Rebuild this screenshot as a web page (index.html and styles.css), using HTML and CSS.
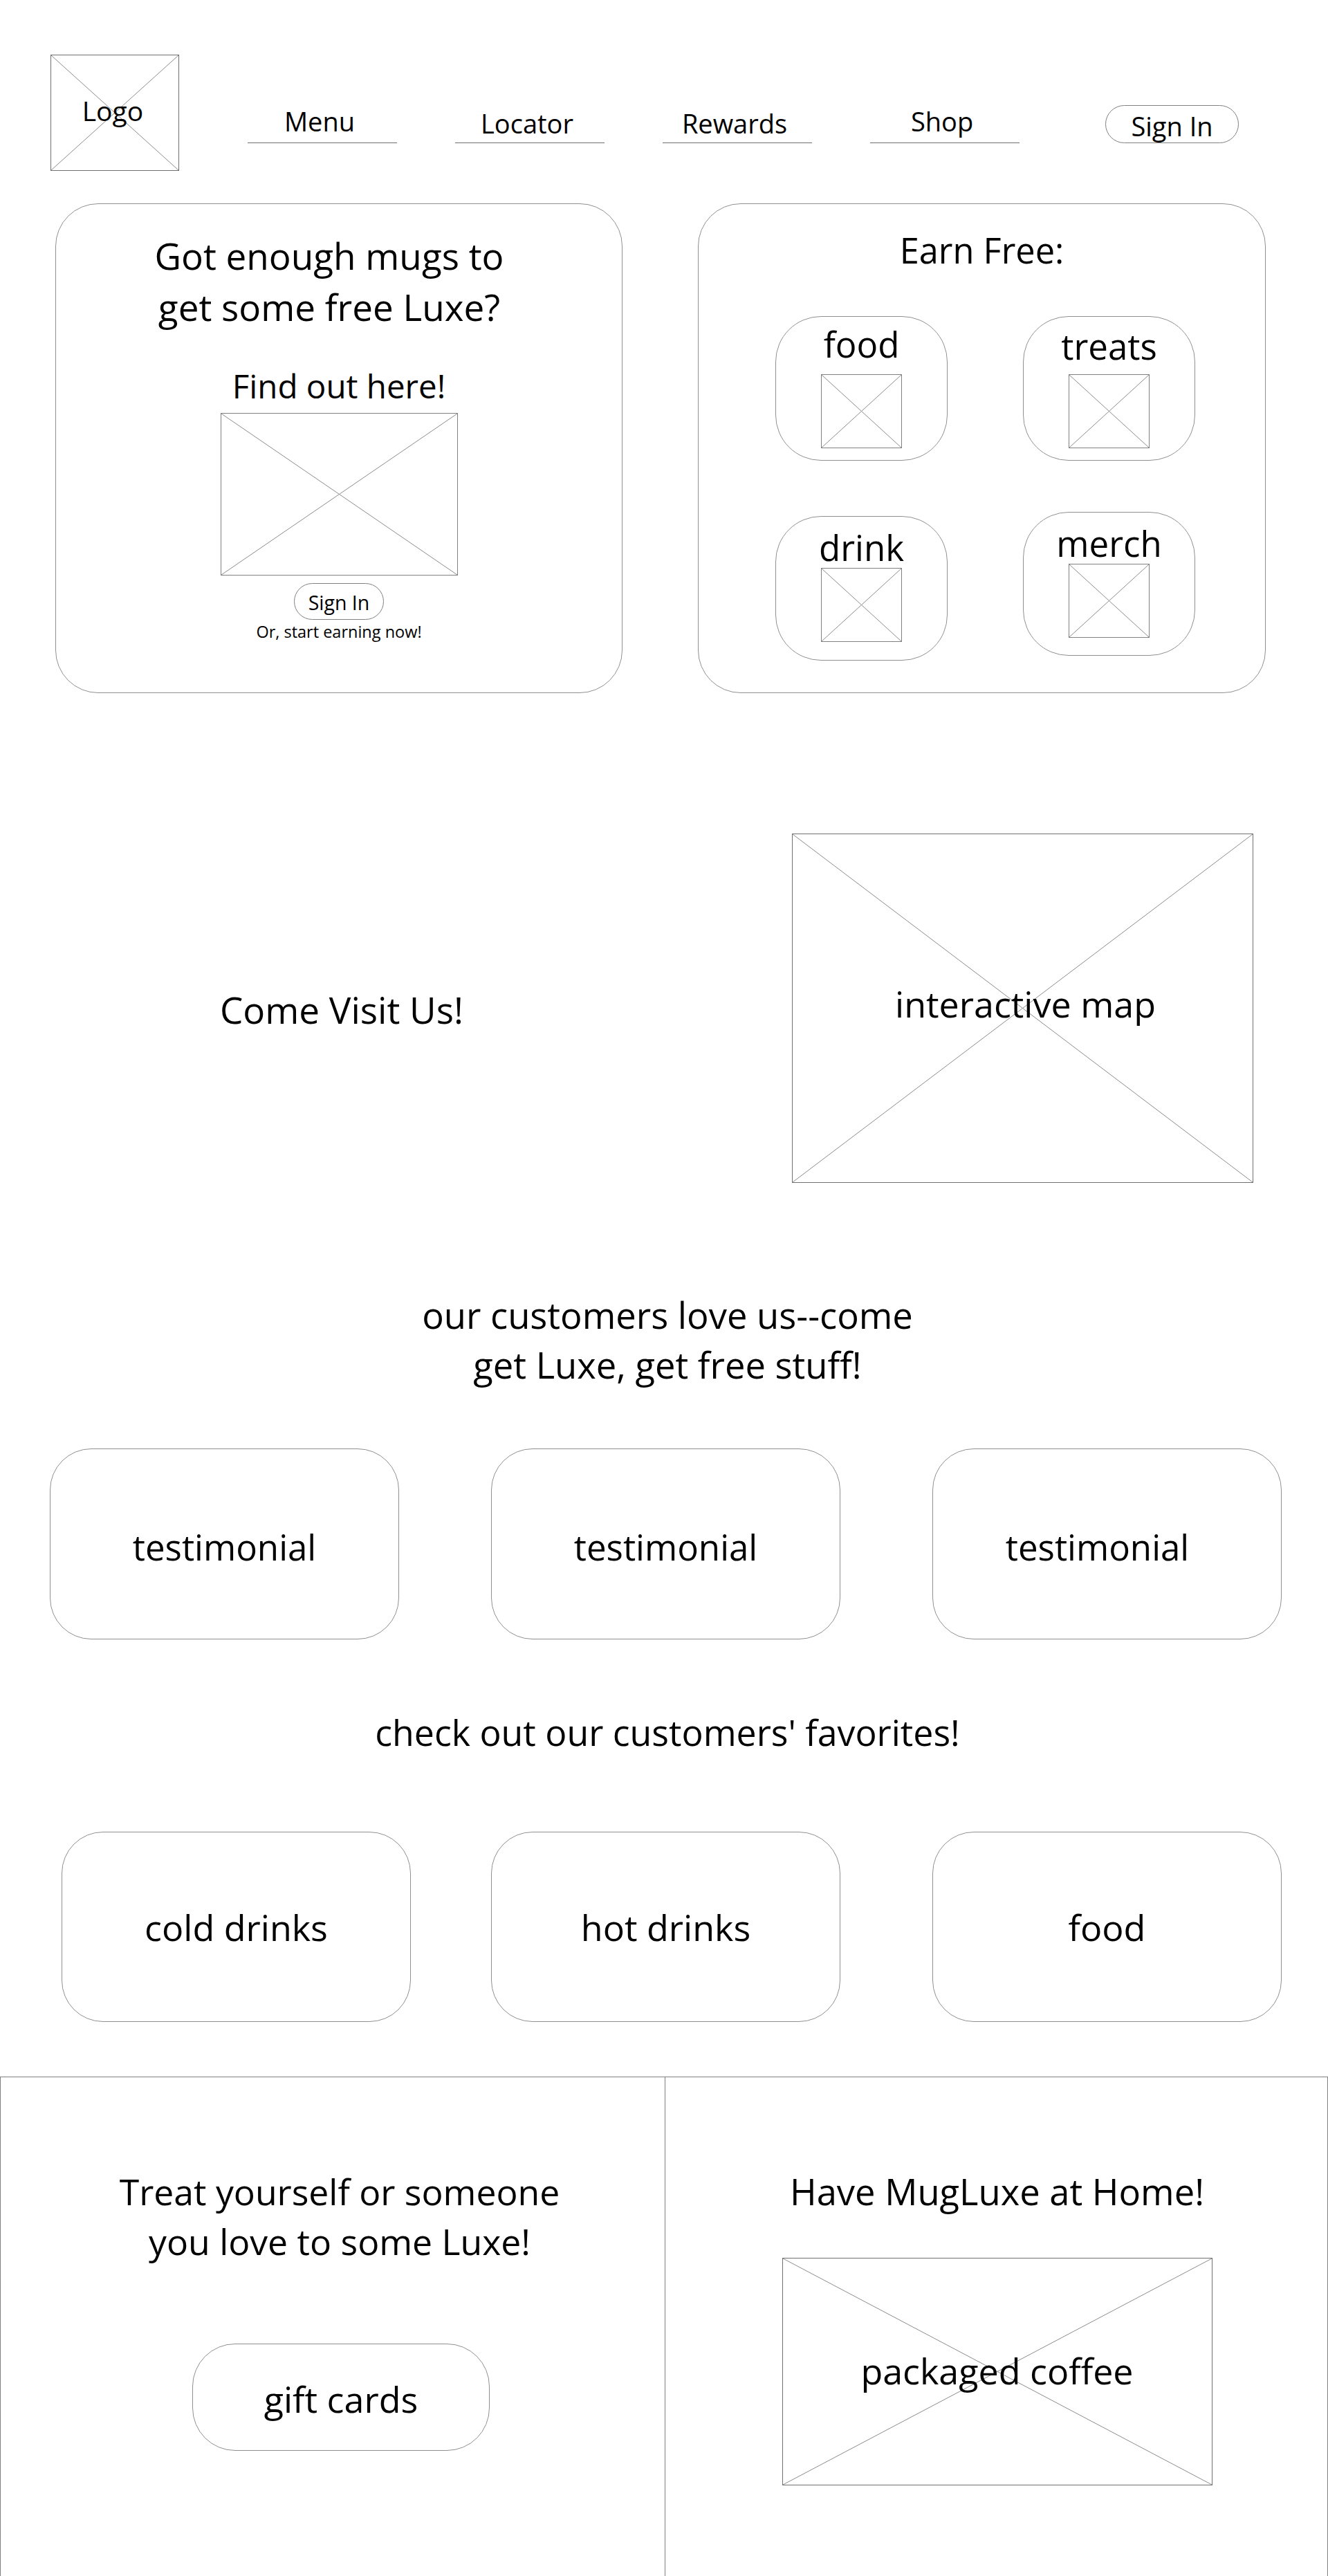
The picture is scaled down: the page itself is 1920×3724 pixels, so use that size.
FILE: index.html
```html
<!DOCTYPE html>
<html lang="en">
<head>
<meta charset="utf-8">
<title>MugLuxe Rewards</title>
<link rel="stylesheet" href="styles.css">
</head>
<body>
<header class="header">
  <div class="ph logo">
    <svg class="cross" viewBox="0 0 100 100" preserveAspectRatio="none"><line x1="0" y1="0" x2="100" y2="100"/><line x1="100" y1="0" x2="0" y2="100"/></svg>
    <span class="ph-label">Logo</span>
  </div>
  <nav class="nav">
    <a class="nav-link nav-up">Menu</a>
    <a class="nav-link">Locator</a>
    <a class="nav-link">Rewards</a>
    <a class="nav-link nav-up">Shop</a>
  </nav>
  <a class="pill nav-signin">Sign In</a>
</header>

<section class="rewards">
  <div class="card card-left">
    <h1 class="big-heading">Got enough mugs to<br>get some free Luxe?</h1>
    <p class="find">Find out here!</p>
    <div class="ph find-img">
      <svg class="cross" viewBox="0 0 100 100" preserveAspectRatio="none"><line x1="0" y1="0" x2="100" y2="100"/><line x1="100" y1="0" x2="0" y2="100"/></svg>
    </div>
    <a class="pill small-signin">Sign In</a>
    <p class="earn-now">Or, start earning now!</p>
  </div>
  <div class="card card-right">
    <h2 class="earn-title">Earn Free:</h2>
    <div class="tiles">
      <div class="tile">
        <span class="tile-label">food</span>
        <div class="ph tile-img"><svg class="cross" viewBox="0 0 100 100" preserveAspectRatio="none"><line x1="0" y1="0" x2="100" y2="100"/><line x1="100" y1="0" x2="0" y2="100"/></svg></div>
      </div>
      <div class="tile">
        <span class="tile-label tile-label-low">treats</span>
        <div class="ph tile-img"><svg class="cross" viewBox="0 0 100 100" preserveAspectRatio="none"><line x1="0" y1="0" x2="100" y2="100"/><line x1="100" y1="0" x2="0" y2="100"/></svg></div>
      </div>
      <div class="tile tile-b">
        <span class="tile-label">drink</span>
        <div class="ph tile-img"><svg class="cross" viewBox="0 0 100 100" preserveAspectRatio="none"><line x1="0" y1="0" x2="100" y2="100"/><line x1="100" y1="0" x2="0" y2="100"/></svg></div>
      </div>
      <div class="tile tile-b tile-up">
        <span class="tile-label">merch</span>
        <div class="ph tile-img"><svg class="cross" viewBox="0 0 100 100" preserveAspectRatio="none"><line x1="0" y1="0" x2="100" y2="100"/><line x1="100" y1="0" x2="0" y2="100"/></svg></div>
      </div>
    </div>
  </div>
</section>

<section class="visit">
  <h2 class="visit-text">Come Visit Us!</h2>
  <div class="ph map">
    <svg class="cross" viewBox="0 0 100 100" preserveAspectRatio="none"><line x1="0" y1="0" x2="100" y2="100"/><line x1="100" y1="0" x2="0" y2="100"/></svg>
    <span class="ph-label big">interactive map</span>
  </div>
</section>

<h2 class="section-heading love">our customers love us--come<br>get Luxe, get free stuff!</h2>
<section class="card-row testimonials">
  <div class="box">testimonial</div>
  <div class="box">testimonial</div>
  <div class="box box-shift">testimonial</div>
</section>

<h2 class="section-heading favs">check out our customers' favorites!</h2>
<section class="card-row favorites">
  <div class="box">cold drinks</div>
  <div class="box">hot drinks</div>
  <div class="box">food</div>
</section>

<section class="bottom">
  <div class="half">
    <h2 class="half-heading">Treat yourself or someone<br>you love to some Luxe!</h2>
    <a class="gift">gift cards</a>
  </div>
  <div class="half half-right">
    <h2 class="half-heading">Have MugLuxe at Home!</h2>
    <div class="ph coffee">
      <svg class="cross" viewBox="0 0 100 100" preserveAspectRatio="none"><line x1="0" y1="0" x2="100" y2="100"/><line x1="100" y1="0" x2="0" y2="100"/></svg>
      <span class="ph-label big">packaged coffee</span>
    </div>
  </div>
</section>
</body>
</html>
```

FILE: styles.css
```css
* { box-sizing: border-box; }

html, body {
  margin: 0;
  padding: 0;
  background: #fff;
}

body {
  width: 1920px;
  font-family: "Open Sans", "Noto Sans", sans-serif;
  color: #000;
}

h1, h2, p { margin: 0; font-weight: 400; }
a { color: #000; text-decoration: none; }

/* placeholder boxes with an X */
.ph {
  position: relative;
  border: 1px solid #808080;
  display: flex;
  align-items: center;
  justify-content: center;
}
.cross {
  position: absolute;
  top: 0; left: 0;
  width: 100%;
  height: 100%;
}
.cross line {
  stroke: #8c8c8c;
  stroke-width: 1;
  vector-effect: non-scaling-stroke;
}
.ph-label {
  position: relative;
  font-size: 38px;
  line-height: 1;
}
.ph-label.big { font-size: 52px; }

/* header */
.header {
  display: flex;
  align-items: flex-start;
  padding: 79px 0 0 73px;
  height: 294px;
}
.logo {
  width: 186px;
  height: 168px;
  border-color: #707070;
}
.logo .ph-label { top: -4px; left: -3px; font-size: 39px; }
.nav {
  display: flex;
  gap: 84px;
  margin: 73px 0 0 99px;
}
.nav-link {
  width: 216px;
  height: 55px;
  border-bottom: 1px solid #707070;
  text-align: center;
  font-size: 38px;
  line-height: 52px;
  padding-right: 8px;
}
.nav-link.nav-up { line-height: 46px; }
.pill {
  display: flex;
  align-items: center;
  justify-content: center;
  border: 1px solid #808080;
}
.nav-signin {
  margin: 73px 0 0 124px;
  width: 193px;
  height: 55px;
  border-radius: 28px;
  font-size: 38px;
  padding-top: 4px;
}

/* reward cards */
.rewards {
  display: flex;
  gap: 109px;
  padding-left: 80px;
}
.card {
  height: 708px;
  border: 1px solid #909090;
  border-radius: 62px;
  display: flex;
  flex-direction: column;
  align-items: center;
}
.card-left {
  width: 820px;
  padding-top: 38px;
}
.card-right {
  width: 821px;
  padding-top: 37px;
}
.big-heading {
  font-size: 53px;
  line-height: 74px;
  text-align: center;
  padding-right: 28px;
}
.find {
  margin-top: 49px;
  font-size: 47.5px;
  line-height: 56px;
}
.find-img {
  margin-top: 11px;
  width: 343px;
  height: 235px;
}
.small-signin {
  margin-top: 11px;
  width: 130px;
  height: 53px;
  border-radius: 27px;
  font-size: 28.5px;
  padding-top: 2px;
}
.earn-now {
  margin-top: 2px;
  font-size: 23.5px;
  line-height: 30px;
}
.earn-title {
  font-size: 50.5px;
  line-height: 60px;
}
.tiles {
  margin-top: 65px;
  display: grid;
  grid-template-columns: 249px 249px;
  column-gap: 109px;
  row-gap: 80px;
  margin-left: 10px;
}
.tile {
  height: 209px;
  border: 1px solid #909090;
  border-radius: 66px;
  display: flex;
  flex-direction: column;
  align-items: center;
  padding-top: 9px;
}
.tile-label {
  font-size: 51px;
  line-height: 60px;
}
.tile-label-low { margin-top: 3px; margin-bottom: -3px; }
.tile-img {
  margin-top: 14px;
  width: 117px;
  height: 107px;
}
.tile-b { padding-top: 14px; }
.tile-b .tile-img { margin-top: 0; }
.tile-up { margin-top: -6px; height: 208px; }

/* visit */
.visit {
  display: flex;
  align-items: center;
  margin-top: 203px;
}
.visit-text {
  width: 988px;
  text-align: center;
  font-size: 53px;
  line-height: 72px;
  padding-top: 4px;
}
.map {
  margin-left: 157px;
  width: 667px;
  height: 505px;
  border-color: #707070;
}
.map .ph-label { top: -7px; left: 4px; }

/* testimonials / favourites */
.section-heading {
  text-align: center;
  font-size: 52.5px;
  line-height: 72px;
  padding-left: 10px;
}
.love { margin-top: 155px; }
.card-row {
  display: flex;
}
.testimonials {
  margin-top: 85px;
  padding-left: 72px;
  gap: 133px;
}
.box {
  width: 505px;
  height: 276px;
  border: 1px solid #909090;
  border-radius: 60px;
  display: flex;
  align-items: center;
  justify-content: center;
  font-size: 51px;
  padding-top: 8px;
}
.box-shift { padding-right: 28px; }
.favs { margin-top: 98px; font-size: 51.8px; }
.favorites {
  margin-top: 108px;
  padding-left: 89px;
  gap: 116px;
}
.favorites .box {
  height: 275px;
  padding-top: 0;
  font-size: 52px;
}
.favorites .box + .box + .box { margin-left: 17px; }

/* bottom halves */
.bottom {
  margin-top: 79px;
  display: grid;
  grid-template-columns: 960px 960px;
  border: 1px solid #808080;
  height: 723px;
}
.half {
  display: flex;
  flex-direction: column;
  align-items: center;
  padding-top: 129px;
}
.half-right {
  border-left: 1px solid #808080;
}
.half-heading {
  font-size: 51.7px;
  line-height: 72px;
  text-align: center;
  padding-left: 20px;
}
.half-right .half-heading { padding-left: 0; font-size: 52.5px; }
.gift {
  margin-top: 112px;
  margin-left: 24px;
  width: 430px;
  height: 155px;
  border: 1px solid #909090;
  border-radius: 62px;
  display: flex;
  align-items: center;
  justify-content: center;
  font-size: 52px;
  padding-top: 4px;
}
.coffee {
  margin-top: 60px;
  width: 622px;
  height: 329px;
  border-color: #707070;
}
.coffee .ph-label { top: -2px; }
```
